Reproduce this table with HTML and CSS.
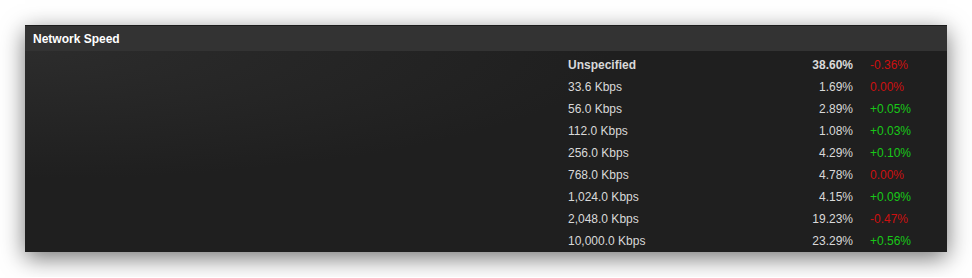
FILE: index.html
```html
<!DOCTYPE html>
<html lang="en">
<head>
    <meta charset="UTF-8">
    <title>Network Speed</title>
    <link rel="stylesheet" href="styles.css">
</head>
<body>
    <!-- Network Speed panel -->
    <div class="stat-panel">
        <div class="stat-header">Network Speed</div>
        <div class="stat-body">
            <div class="stat-table">
                <div class="stat-row top">
                    <span class="stat-name">Unspecified</span>
                    <span class="stat-value">38.60%</span>
                    <span class="stat-change down">-0.36%</span>
                </div>
                <div class="stat-row">
                    <span class="stat-name">33.6 Kbps</span>
                    <span class="stat-value">1.69%</span>
                    <span class="stat-change down">0.00%</span>
                </div>
                <div class="stat-row">
                    <span class="stat-name">56.0 Kbps</span>
                    <span class="stat-value">2.89%</span>
                    <span class="stat-change up">+0.05%</span>
                </div>
                <div class="stat-row">
                    <span class="stat-name">112.0 Kbps</span>
                    <span class="stat-value">1.08%</span>
                    <span class="stat-change up">+0.03%</span>
                </div>
                <div class="stat-row">
                    <span class="stat-name">256.0 Kbps</span>
                    <span class="stat-value">4.29%</span>
                    <span class="stat-change up">+0.10%</span>
                </div>
                <div class="stat-row">
                    <span class="stat-name">768.0 Kbps</span>
                    <span class="stat-value">4.78%</span>
                    <span class="stat-change down">0.00%</span>
                </div>
                <div class="stat-row">
                    <span class="stat-name">1,024.0 Kbps</span>
                    <span class="stat-value">4.15%</span>
                    <span class="stat-change up">+0.09%</span>
                </div>
                <div class="stat-row">
                    <span class="stat-name">2,048.0 Kbps</span>
                    <span class="stat-value">19.23%</span>
                    <span class="stat-change down">-0.47%</span>
                </div>
                <div class="stat-row">
                    <span class="stat-name">10,000.0 Kbps</span>
                    <span class="stat-value">23.29%</span>
                    <span class="stat-change up">+0.56%</span>
                </div>
            </div>
        </div>
    </div>
</body>
</html>
```

FILE: styles.css
```css
* {
    box-sizing: border-box;
    margin: 0;
    padding: 0;
}
body {
    font-family: 'Liberation Sans', Arial, sans-serif;
    background: #fff;
    font-size: 12px;
    padding: 25px;
}

/* Panel */
.stat-panel {
    width: 922px;
    background: #1f1f1f;
    box-shadow: 0 6px 22px rgba(0, 0, 0, 0.55);
}
.stat-header {
    height: 26px;
    padding: 1px 8px 0;
    background: #333;
    border-top: 1px solid #1c1c1c;
    color: #fff;
    font-weight: 700;
    line-height: 24px;
}
.stat-body {
    height: 201px;
    padding: 3px 0 0;
    background: radial-gradient(ellipse at 0 0, #2c2c2c 0%, #1f1f1f 45%);
    display: flex;
    justify-content: flex-end;
}

/* Table */
.stat-table {
    width: 379px;
}
.stat-row {
    display: grid;
    grid-template-columns: 200px 85px 1fr;
    height: 22px;
    line-height: 22px;
    color: #d9d9d9;
}
.stat-row.top .stat-name,
.stat-row.top .stat-value {
    font-weight: 700;
}
.stat-value {
    text-align: right;
}
.stat-change {
    padding-left: 17px;
}
.stat-change.up {
    color: #18c818;
}
.stat-change.down {
    color: #cc1010;
}
```
